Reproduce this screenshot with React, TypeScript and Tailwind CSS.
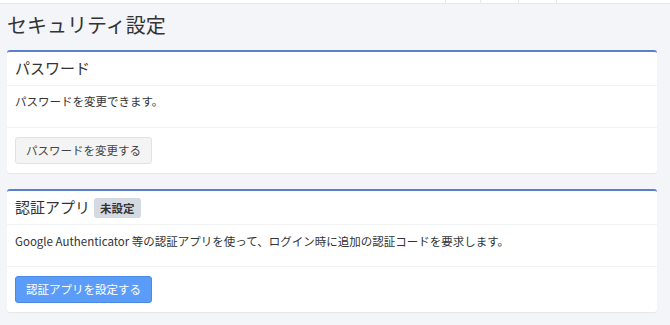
import React from "react";

export default function App() {
  const font = { fontFamily: '"Noto Sans CJK JP", "Noto Sans", sans-serif' };
  return (
    <div className="w-[670px] h-[325px] bg-[#f4f5f9] text-[#333] overflow-hidden" style={font}>
      <div className="h-[4px] bg-white border-b border-[#e6e8ee] flex">
        <div className="w-[445px]" />
        <div className="w-[35px] border-l border-[#e6e8ee]" />
        <div className="w-[38px] border-l border-[#e6e8ee]" />
        <div className="w-[38px] border-l border-[#e6e8ee]" />
        <div className="flex-1 border-l border-[#e6e8ee]" />
      </div>
      <div className="px-[7px] pr-[13px]">
        <h1 className="text-[20px] leading-[28px] mt-[7px] mb-[11px] font-normal">セキュリティ設定</h1>
        <div className="bg-white border-t-2 border-[#5a7fcc] rounded-[3px] shadow-[0_1px_1px_rgba(0,0,0,0.06)]">
          <div className="px-[8px] h-[34px] pb-[2px] flex items-center border-b border-[#f1f2f4]">
            <h2 className="text-[15px] leading-[20px] font-normal">パスワード</h2>
          </div>
          <div className="px-[8px] h-[42px] pt-[6px] border-b border-[#f1f2f4]">
            <p className="text-[11.5px] leading-[18px]">パスワードを変更できます。</p>
          </div>
          <div className="px-[8px] pt-[8px] pb-[9px]">
            <button className="h-[27px] px-[10px] text-[11.5px] bg-[#f4f4f4] border border-[#e2e2e2] rounded-[3px] text-[#444]">
              パスワードを変更する
            </button>
          </div>
        </div>
        <div className="mt-[16px] bg-white border-t-2 border-[#5a7fcc] rounded-[3px] shadow-[0_1px_1px_rgba(0,0,0,0.06)]">
          <div className="px-[8px] h-[34px] pb-[2px] flex items-center border-b border-[#f1f2f4]">
            <h2 className="text-[15px] leading-[20px] font-normal">認証アプリ</h2>
            <span className="ml-[4px] mt-[3px] h-[20px] px-[6px] flex items-center text-[11.5px] font-bold bg-[#d5d9e1] rounded-[3px] text-[#333]">
              未設定
            </span>
          </div>
          <div className="px-[8px] h-[42px] pt-[7px] border-b border-[#f1f2f4]">
            <p className="text-[11.5px] leading-[18px]">
              Google Authenticator 等の認証アプリを使って、ログイン時に追加の認証コードを要求します。
            </p>
          </div>
          <div className="px-[8px] pt-[8px] pb-[9px]">
            <button className="h-[27px] px-[10px] text-[11.5px] bg-[#5b9cf8] border border-[#4a8ae6] rounded-[3px] text-white">
              認証アプリを設定する
            </button>
          </div>
        </div>
      </div>
    </div>
  );
}
